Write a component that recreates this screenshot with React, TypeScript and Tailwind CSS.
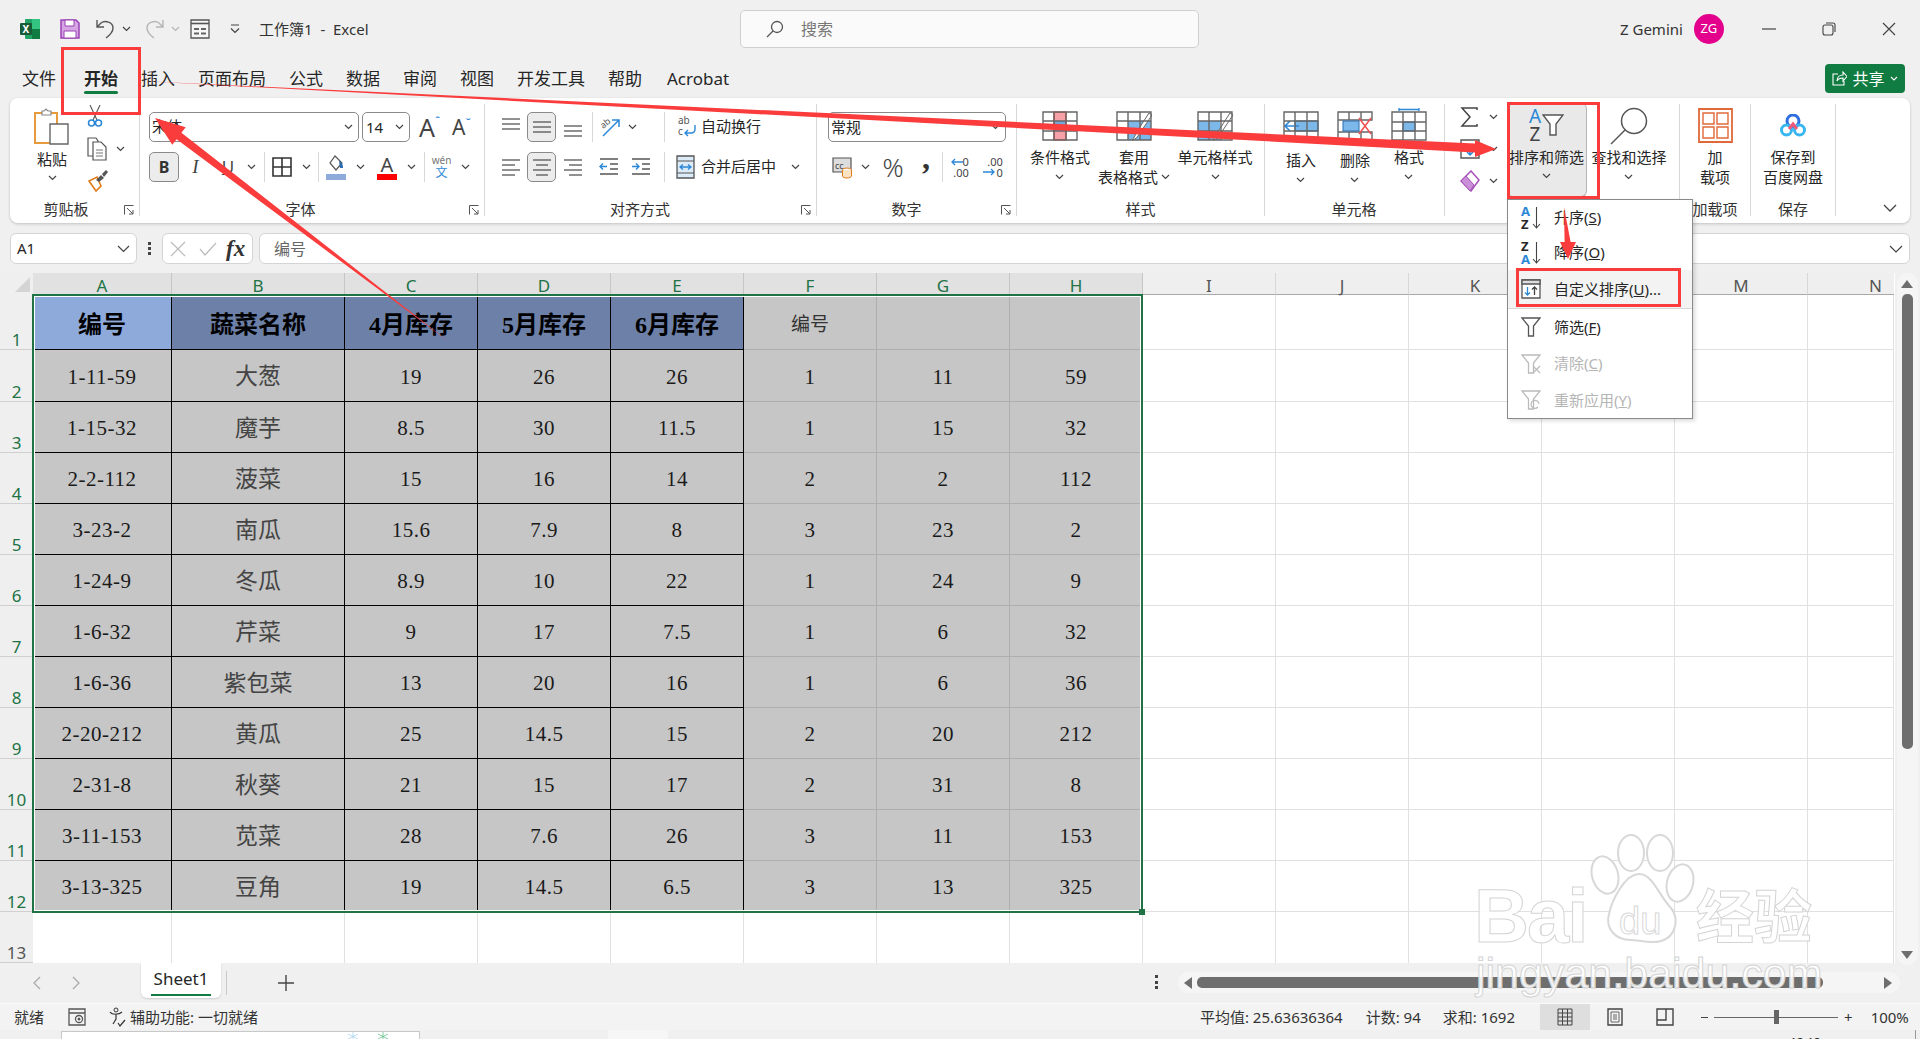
import type { ReactNode } from "react";

const RED = "#fb3c3c";

const rows = [
  ["1-11-59", "大葱", "19", "26", "26", "1", "11", "59"],
  ["1-15-32", "魔芋", "8.5", "30", "11.5", "1", "15", "32"],
  ["2-2-112", "菠菜", "15", "16", "14", "2", "2", "112"],
  ["3-23-2", "南瓜", "15.6", "7.9", "8", "3", "23", "2"],
  ["1-24-9", "冬瓜", "8.9", "10", "22", "1", "24", "9"],
  ["1-6-32", "芹菜", "9", "17", "7.5", "1", "6", "32"],
  ["1-6-36", "紫包菜", "13", "20", "16", "1", "6", "36"],
  ["2-20-212", "黄瓜", "25", "14.5", "15", "2", "20", "212"],
  ["2-31-8", "秋葵", "21", "15", "17", "2", "31", "8"],
  ["3-11-153", "苋菜", "28", "7.6", "26", "3", "11", "153"],
  ["3-13-325", "豆角", "19", "14.5", "6.5", "3", "13", "325"],
];

const colWidths = ["w-[139px]", "w-[173px]", "w-[133px]", "w-[133px]", "w-[133px]", "w-[133px]", "w-[133px]", "w-[133px]"];
const colNames = ["A", "B", "C", "D", "E", "F", "G", "H"];
const emptyCols = ["I", "J", "K", "L", "M"];
const emptyWidths = ["w-[133px]", "w-[133px]", "w-[133px]", "w-[133px]", "w-[133px]", "w-[86px]"];

function Chev({ className = "" }: { className?: string }) {
  return (
    <svg width="9" height="6" viewBox="0 0 9 6" className={`shrink-0 ${className}`}>
      <path d="M1 1l3.5 3.5L8 1" fill="none" stroke="#444" strokeWidth="1.2" />
    </svg>
  );
}

function Sep() {
  return <div className="h-[30px] w-px shrink-0 bg-[#d8d8d8]" />;
}

function Cell({ className, children }: { className: string; children: ReactNode }) {
  return <div className={`flex h-[30px] shrink-0 items-center justify-center ${className}`}>{children}</div>;
}

function Launcher() {
  return (
    <svg width="10" height="10" viewBox="0 0 10 10" className="absolute bottom-[1px] right-[5px]">
      <path d="M.5 9.5v-9h9M3 3l6 6M9 5v4H5" fill="none" stroke="#555" strokeWidth="1" />
    </svg>
  );
}

function Group({ label, launcher, className, labelClass = "", children }: { label: string; launcher?: boolean; className: string; labelClass?: string; children: ReactNode }) {
  return (
    <div className={`relative flex h-[112px] shrink-0 flex-col border-r border-[#d8d8d8] ${className}`}>
      <div className="h-[97px] shrink-0">{children}</div>
      <div className={`text-center text-[15px] leading-[16px] text-[#333] ${labelClass}`}>{label}</div>
      {launcher && <Launcher />}
    </div>
  );
}

function BigBtn({ icon, lines, chevInline, chevBelow = true, className = "", textClass = "" }: { icon: ReactNode; lines: string[]; chevInline?: boolean; chevBelow?: boolean; className?: string; textClass?: string }) {
  return (
    <div className={`flex shrink-0 flex-col items-center ${className}`}>
      <div className="flex h-[43px] items-center justify-center">{icon}</div>
      <div className={`flex flex-col items-center text-[15px] leading-[20px] whitespace-nowrap text-[#262626] ${textClass}`}>
        {lines.map((l, i) => (
          <div key={l} className="flex items-center gap-[3px]">
            {l}
            {chevInline && i === lines.length - 1 && <Chev />}
          </div>
        ))}
        {chevBelow && (
          <div className="flex h-[20px] items-center">
            <Chev />
          </div>
        )}
      </div>
    </div>
  );
}

const Lines = ({ ys }: { ys: number[][] }) => (
  <svg width="20" height="20" viewBox="0 0 20 20">
    {ys.map(([y, a, b]) => (
      <path key={`${y}-${a}`} d={`M${a} ${y}H${b}`} stroke="#555" strokeWidth="1.3" />
    ))}
  </svg>
);

const GridIcon = ({ children }: { children: ReactNode }) => (
  <svg width="36" height="30" viewBox="0 0 36 30">
    {children}
    <path d="M1 1h34v28H1zM1 10h34M1 20h34M12 1v28M24 1v28" fill="none" stroke="#666" strokeWidth="1.4" />
  </svg>
);

function Ribbon() {
  return (
    <div className="mx-[10px] flex h-[125px] shrink-0 rounded-[8px] bg-white pt-[6px] shadow-[0_1px_3px_rgba(0,0,0,0.2)]">
      {/* 剪贴板 */}
      <Group label="剪贴板" launcher className="w-[130px]" labelClass="pr-[17px]">
        <div className="flex">
          <div className="flex w-[84px] flex-col items-center pt-[4px]">
            <svg width="36" height="38" viewBox="0 0 36 38">
              <path d="M1 5h22v30H1z" fill="#fff" stroke="#e89b3c" strokeWidth="2" />
              <path d="M8 5V3h2l2-2 2 2h3v4H8z" fill="#fff" stroke="#888" strokeWidth="1.2" />
              <path d="M16 16h18v20H16z" fill="#fff" stroke="#666" strokeWidth="1.4" />
            </svg>
            <div className="mt-[3px] text-[15px] leading-[20px]">粘贴</div>
            <div className="flex h-[18px] items-center">
              <Chev />
            </div>
          </div>
          <div className="-ml-[7px] flex flex-col gap-[6px]">
            <div className="flex h-[26px] justify-start">
              <svg width="16" height="24" viewBox="0 0 16 24" className="mt-[1px]">
                <path d="M3 0l7 15M13 0L6 15" stroke="#555" strokeWidth="1.1" fill="none" />
                <circle cx="4.5" cy="18" r="3" fill="none" stroke="#2b88d8" strokeWidth="1.5" />
                <circle cx="11.5" cy="18" r="3" fill="none" stroke="#2b88d8" strokeWidth="1.5" />
              </svg>
            </div>
            <div className="flex h-[26px] items-center gap-[9px]">
              <svg width="20" height="24" viewBox="0 0 20 24">
                <path d="M1 1h8l2 3v15H1z" fill="#fff" stroke="#555" strokeWidth="1.2" />
                <path d="M6 5h8l5 5v13H6z" fill="#fff" stroke="#555" strokeWidth="1.2" />
                <path d="M9 13h7M9 16h7M9 19h7" stroke="#777" />
              </svg>
              <Chev />
            </div>
            <svg width="22" height="24" viewBox="0 0 22 24">
              <path d="M2 13l7 10 5-5-4-9z" fill="#fff" stroke="#e07b1a" strokeWidth="1.6" />
              <path d="M9 12l5-5 3 3-5 4zM15 6l4-4 2 2-4 5z" fill="#555" />
            </svg>
          </div>
        </div>
      </Group>

      {/* 字体 */}
      <Group label="字体" launcher className="w-[345px] pl-[9px]" labelClass="pr-[32px]">
        <div className="mt-[8px] flex items-center">
          <div className="flex h-[30px] w-[210px] items-center justify-between rounded-[5px] border border-[#8a8a8a] pl-[2px] pr-[5px] font-['Liberation_Serif','Noto_Sans_CJK_SC',serif] text-[15px]">
            宋体
            <Chev />
          </div>
          <div className="ml-[3px] flex h-[30px] w-[48px] items-center justify-between rounded-[5px] border border-[#8a8a8a] pl-[3px] pr-[5px] text-[15px]">
            14
            <Chev />
          </div>
          <div className="ml-[9px] flex w-[33px] items-start text-[25px] leading-none text-[#444]">
            A<span className="text-[11px] font-bold text-[#2b88d8]">ˆ</span>
          </div>
          <div className="flex w-[32px] items-start text-[21px] leading-none text-[#444]">
            A<span className="text-[11px] font-bold text-[#2b88d8]">ˇ</span>
          </div>
        </div>
        <div className="mt-[10px] flex items-center">
          <div className="flex h-[30px] w-[30px] shrink-0 items-center justify-center rounded-[5px] border border-[#8a8a8a] bg-[#ececec] text-[16px] font-bold text-[#333]">B</div>
          <Cell className="w-[33px] font-['Liberation_Serif',serif] text-[19px] italic text-[#444]">I</Cell>
          <Cell className="w-[32px] text-[17px] text-[#444] underline">U</Cell>
          <Cell className="w-[14px]"><Chev /></Cell>
          <div className="ml-[6px]"><Sep /></div>
          <Cell className="w-[34px]">
            <svg width="20" height="20" viewBox="0 0 20 20"><path d="M1 1h18v18H1zM10 1v18M1 10h18" fill="none" stroke="#333" strokeWidth="1.6" /></svg>
          </Cell>
          <Cell className="w-[14px]"><Chev /></Cell>
          <div className="ml-[5px]"><Sep /></div>
          <Cell className="w-[34px]">
            <svg width="20" height="25" viewBox="0 0 20 25">
              <path d="M9 1l7 7-6 7-6-7z" fill="#fff" stroke="#555" strokeWidth="1.2" />
              <path d="M13 6c3 1 4 4 4 7h-3z" fill="#2b6cb0" />
              <rect y="19" width="20" height="6" fill="#8eaadb" />
            </svg>
          </Cell>
          <Cell className="w-[14px]"><Chev /></Cell>
          <Cell className="ml-[3px] w-[34px]">
            <div className="flex flex-col items-center">
              <span className="text-[20px] leading-[19px] text-[#444]">A</span>
              <div className="h-[6px] w-[20px] bg-[#ff0000]" />
            </div>
          </Cell>
          <Cell className="w-[14px]"><Chev /></Cell>
          <div className="ml-[6px]"><Sep /></div>
          <Cell className="w-[33px]">
            <div className="flex flex-col items-center text-[#777]">
              <span className="text-[10px] leading-[11px]">wén</span>
              <span className="text-[12px] leading-[13px] text-[#2b88d8]">文</span>
            </div>
          </Cell>
          <Cell className="w-[14px]"><Chev /></Cell>
        </div>
      </Group>

      {/* 对齐方式 */}
      <Group label="对齐方式" launcher className="w-[332px] pl-[9px]" labelClass="pr-[30px]">
        <div className="mt-[8px] flex items-center">
          <Cell className="w-[33px]"><Lines ys={[[2, 1, 19], [7, 1, 19], [12, 1, 19]]} /></Cell>
          <Cell className="w-[29px] rounded-[5px] border border-[#8a8a8a] bg-[#ececec]"><Lines ys={[[5, 1, 19], [10, 1, 19], [15, 1, 19]]} /></Cell>
          <Cell className="w-[34px]"><Lines ys={[[9, 1, 19], [14, 1, 19], [19, 1, 19]]} /></Cell>
          <div className="ml-[2px]"><Sep /></div>
          <Cell className="w-[34px]">
            <svg width="22" height="22" viewBox="0 0 22 22" className="overflow-visible">
              <text x="2" y="11" fontSize="9" fill="#555" transform="rotate(-40 6 9)">ab</text>
              <path d="M4 20L20 4M13 4h7v7" fill="none" stroke="#2b88d8" strokeWidth="1.5" />
            </svg>
          </Cell>
          <Chev className="ml-[1px]" />
          <div className="ml-[27px]"><Sep /></div>
          <div className="-mt-[2px] ml-[13px] flex items-center text-[15px] text-[#262626]">
            <svg width="18" height="24" viewBox="0 0 18 24" className="mr-[5px]">
              <text x="0" y="10" fontSize="10" fill="#555">ab</text>
              <text x="0" y="21" fontSize="10" fill="#555">c</text>
              <path d="M17 11v4c0 3-2 4-4 4H7M10 16l-3 3 3 3" fill="none" stroke="#2b88d8" strokeWidth="1.4" />
            </svg>
            自动换行
          </div>
        </div>
        <div className="mt-[10px] flex items-center">
          <Cell className="w-[33px]"><Lines ys={[[3, 1, 19], [8, 1, 14], [13, 1, 19], [18, 1, 14]]} /></Cell>
          <Cell className="w-[29px] rounded-[5px] border border-[#8a8a8a] bg-[#ececec]"><Lines ys={[[3, 1, 19], [8, 4, 16], [13, 1, 19], [18, 4, 16]]} /></Cell>
          <Cell className="w-[34px]"><Lines ys={[[3, 1, 19], [8, 6, 19], [13, 1, 19], [18, 6, 19]]} /></Cell>
          <Cell className="w-[37px]">
            <svg width="20" height="18" viewBox="0 0 20 18">
              <path d="M1 1h18M11 6h8M11 11h8M1 16h18" stroke="#555" strokeWidth="1.3" />
              <path d="M8 8.5H1M4 5.5l-3 3 3 3" fill="none" stroke="#2b88d8" strokeWidth="1.4" />
            </svg>
          </Cell>
          <Cell className="w-[27px]">
            <svg width="20" height="18" viewBox="0 0 20 18">
              <path d="M1 1h18M11 6h8M11 11h8M1 16h18" stroke="#555" strokeWidth="1.3" />
              <path d="M1 8.5h7M5 5.5l3 3-3 3" fill="none" stroke="#2b88d8" strokeWidth="1.4" />
            </svg>
          </Cell>
          <div className="ml-[10px]"><Sep /></div>
          <svg width="19" height="24" viewBox="0 0 19 24" className="ml-[11px] shrink-0">
            <path d="M1 1h17v22H1z" fill="#dcebf8" stroke="#555" strokeWidth="1.3" />
            <path d="M1 6h17M1 18h17" stroke="#555" />
            <path d="M4 12h11M7 9.5L4 12l3 2.5M12 9.5l3 2.5-3 2.5" fill="none" stroke="#2b88d8" strokeWidth="1.3" />
          </svg>
          <span className="-mt-[2px] ml-[6px] text-[15px] whitespace-nowrap text-[#262626]">合并后居中</span>
          <Chev className="ml-[15px]" />
        </div>
      </Group>

      {/* 数字 */}
      <Group label="数字" launcher className="w-[200px]" labelClass="pr-[20px]">
        <div className="ml-[11px] mt-[8px] flex h-[30px] w-[178px] items-center justify-between rounded-[5px] border border-[#8a8a8a] pl-[2px] pr-[5px] text-[15px]">
          常规
          <Chev />
        </div>
        <div className="mt-[10px] flex items-center pl-[15px]">
          <svg width="20" height="24" viewBox="0 0 20 24" className="shrink-0">
            <path d="M1 3h18v14H1z" fill="#ddd" stroke="#555" strokeWidth="1.2" />
            <text x="3" y="14" fontSize="9" fill="#444">cc</text>
            <ellipse cx="15" cy="15" rx="4.5" ry="2" fill="#fff" stroke="#e07b1a" />
            <path d="M10.5 15v6c0 1 2 2 4.5 2s4.5-1 4.5-2v-6" fill="#fbe3c4" stroke="#e07b1a" />
          </svg>
          <Chev className="ml-[9px]" />
          <Cell className="ml-[8px] w-[30px] text-[26px] font-light text-[#444]">%</Cell>
          <Cell className="ml-[3px] w-[30px] font-['Liberation_Serif',serif] text-[32px] font-bold text-[#333]">
            <span className="-mt-[18px]">,</span>
          </Cell>
          <div className="ml-[1px]"><Sep /></div>
          <Cell className="ml-[2px] w-[32px]">
            <div className="relative flex flex-col items-end text-[11px] leading-[11px] text-[#444]">
              <span>0</span>
              <span>.00</span>
              <svg width="12" height="8" viewBox="0 0 12 8" className="absolute -left-[2px] top-[2px]"><path d="M12 4H1M4 1L1 4l3 3" fill="none" stroke="#2b88d8" strokeWidth="1.3" /></svg>
            </div>
          </Cell>
          <Cell className="ml-[1px] w-[34px]">
            <div className="relative flex flex-col items-end text-[11px] leading-[11px] text-[#444]">
              <span>.00</span>
              <span>0</span>
              <svg width="12" height="8" viewBox="0 0 12 8" className="absolute -left-[4px] top-[12px]"><path d="M0 4h11M8 1l3 3-3 3" fill="none" stroke="#2b88d8" strokeWidth="1.3" /></svg>
            </div>
          </Cell>
        </div>
      </Group>

      {/* 样式 */}
      <Group label="样式" className="w-[248px]">
        <div className="flex">
          <BigBtn
            className="ml-[6px] w-[74px]"
            lines={["条件格式"]}
            icon={<GridIcon><rect x="12" y="1" width="12" height="10" fill="#f8a0a8" /><rect x="12" y="10" width="12" height="10" fill="#6fa8dc" /><rect x="12" y="20" width="12" height="9" fill="#f8a0a8" /><path d="M12 1h12v28H12z" fill="none" stroke="#e03030" strokeWidth="1.2" /></GridIcon>}
          />
          <BigBtn
            className="w-[74px]"
            lines={["套用", "表格格式"]}
            chevInline
            chevBelow={false}
            icon={<GridIcon><rect x="12" y="10" width="23" height="19" fill="#7db8ea" /><path d="M36 4L22 25c-2 3-5 4-6 4 2-2 3-4 4-7L33 2z" fill="#fff" stroke="#666" /></GridIcon>}
          />
          <BigBtn
            className="ml-[7px] w-[74px]"
            lines={["单元格样式"]}
            icon={<GridIcon><rect x="1" y="10" width="22" height="19" fill="#7db8ea" /><path d="M36 4L22 25c-2 3-5 4-6 4 2-2 3-4 4-7L33 2z" fill="#fff" stroke="#666" /></GridIcon>}
          />
        </div>
      </Group>

      {/* 单元格 */}
      <Group label="单元格" className="w-[180px] pl-[9px]" labelClass="pr-[10px]">
        <div className="flex">
          <BigBtn
            className="w-[54px]"
            textClass="mt-[3px]"
            lines={["插入"]}
            icon={<GridIcon><rect x="12" y="10" width="23" height="10" fill="#7db8ea" stroke="#2b6cb0" /><path d="M16 15H2M7 10l-5 5 5 5" fill="none" stroke="#2b88d8" strokeWidth="1.6" /></GridIcon>}
          />
          <BigBtn
            className="w-[54px]"
            textClass="mt-[3px]"
            lines={["删除"]}
            icon={
              <svg width="36" height="30" viewBox="0 0 36 30">
                <path d="M1 1h34v8H1zM1 21h34v8H1zM1 9v12M12 1v8M24 1v8M12 21v8M24 21v8" fill="none" stroke="#666" strokeWidth="1.4" />
                <rect x="6" y="10" width="16" height="10" fill="#7db8ea" stroke="#2b6cb0" />
                <path d="M22 7l12 16M34 7L22 23" stroke="#f05050" strokeWidth="1.5" />
              </svg>
            }
          />
          <BigBtn
            className="w-[54px]"
            lines={["格式"]}
            icon={
              <svg width="36" height="34" viewBox="0 0 36 34" className="-mt-[4px]">
                <path d="M8 1v3M28 1v3M8 2.5h20" stroke="#2b88d8" strokeWidth="1.3" />
                <rect x="12" y="15" width="12" height="9" fill="#7db8ea" stroke="#2b6cb0" />
                <path d="M1 5h34v28H1zM1 15h34M1 24h34M12 5v28M24 5v28" fill="none" stroke="#666" strokeWidth="1.4" />
              </svg>
            }
          />
        </div>
      </Group>

      {/* 编辑 */}
      <Group label="" className="w-[235px]">
        <div className="flex">
          <div className="flex w-[62px] shrink-0 flex-col gap-[6px] pl-[15px]">
            <div className="flex h-[26px] items-center gap-[9px]">
              <svg width="20" height="20" viewBox="0 0 20 20"><path d="M17 3V1H2l8 9-8 9h15v-2" fill="none" stroke="#444" strokeWidth="1.5" /></svg>
              <Chev />
            </div>
            <div className="flex h-[26px] items-center gap-[9px]">
              <svg width="20" height="20" viewBox="0 0 20 20">
                <path d="M1 1h18v18H1zM1 6h18" fill="#fff" stroke="#555" strokeWidth="1.4" />
                <path d="M10 9v7M7 13l3 3 3-3" fill="none" stroke="#2b88d8" strokeWidth="1.5" />
              </svg>
              <Chev />
            </div>
            <div className="flex h-[26px] items-center gap-[9px]">
              <svg width="20" height="22" viewBox="0 0 20 22">
                <path d="M11 1l8 9-8 11-10-10z" fill="#fff" stroke="#a64fb8" strokeWidth="1.5" />
                <path d="M1 11l5-5 8 9-4 6z" fill="#c98fd8" stroke="#a64fb8" />
              </svg>
              <Chev />
            </div>
          </div>
          <div className="-mt-[1px] h-[94px] w-[80px] shrink-0 rounded-[6px] border border-l-0 border-t-0 border-[#b5b5b5] bg-[#e9e9e9]">
            <div className="flex h-[44px] items-center justify-center">
              <div className="flex items-center gap-[1px]">
                <div className="flex flex-col items-center text-[19px] leading-[18px]">
                  <span className="text-[#2b88d8]">A</span>
                  <span className="text-[#444]">Z</span>
                </div>
                <svg width="22" height="22" viewBox="0 0 22 22"><path d="M1 1h20l-7 9v11H8V10z" fill="#fff" stroke="#555" strokeWidth="1.4" /></svg>
              </div>
            </div>
            <div className="text-center text-[15px] leading-[20px] whitespace-nowrap">排序和筛选</div>
            <div className="flex h-[18px] items-center justify-center"><Chev /></div>
          </div>
          <BigBtn
            className="w-[84px]"
            lines={["查找和选择"]}
            icon={
              <svg width="38" height="38" viewBox="0 0 38 38">
                <circle cx="24" cy="14" r="12.5" fill="#fff" stroke="#555" strokeWidth="1.5" />
                <path d="M15 23L1 37" stroke="#555" strokeWidth="1.5" />
              </svg>
            }
          />
        </div>
      </Group>

      {/* 加载项 */}
      <Group label="加载项" className="w-[71px]">
        <BigBtn
          lines={["加", "载项"]}
          chevBelow={false}
          icon={
            <svg width="35" height="35" viewBox="0 0 35 35">
              <path d="M1 1h33v33H1z" fill="#fff" stroke="#e0693a" strokeWidth="1.8" />
              <path d="M5 5h11v11H5zM19 5h11v11H19zM5 19h11v11H5zM19 19h11v11H19z" fill="#fff" stroke="#e0693a" strokeWidth="1.4" />
            </svg>
          }
        />
      </Group>

      {/* 保存 */}
      <Group label="保存" className="w-[85px]">
        <BigBtn
          lines={["保存到", "百度网盘"]}
          chevBelow={false}
          icon={
            <svg width="26" height="24" viewBox="0 0 26 24">
              <circle cx="13" cy="7" r="6" fill="none" stroke="#2f6fe0" strokeWidth="3" />
              <circle cx="6.5" cy="16" r="5" fill="none" stroke="#38b6f0" strokeWidth="3" />
              <circle cx="19.5" cy="16" r="5" fill="none" stroke="#38b6f0" strokeWidth="3" />
              <path d="M9 15l4-5 4 5" fill="none" stroke="#ef5a78" strokeWidth="3" />
            </svg>
          }
        />
      </Group>

      <div className="flex flex-1 items-end justify-end pb-[11px] pr-[13px]">
        <svg width="14" height="8" viewBox="0 0 14 8"><path d="M1 1l6 6 6-6" fill="none" stroke="#444" strokeWidth="1.3" /></svg>
      </div>
    </div>
  );
}

function TitleBar() {
  return (
    <div className="flex h-[58px] shrink-0 items-center">
      <svg width="20" height="20" viewBox="0 0 20 20" className="ml-[20px] shrink-0">
        <rect x="5" width="15" height="20" rx="1" fill="#21a366" />
        <rect x="12" width="8" height="10" fill="#33c481" />
        <rect x="12" y="10" width="8" height="10" fill="#107c41" />
        <rect y="4" width="12" height="12" rx="1" fill="#185c37" />
        <text x="2.5" y="13.5" fontSize="10" fontWeight="700" fill="#fff">X</text>
      </svg>
      <svg width="20" height="20" viewBox="0 0 20 20" className="ml-[20px] shrink-0">
        <path d="M1 1h15l3 3v15H1z" fill="#d6a5e4" stroke="#9a42b4" strokeWidth="1.5" />
        <path d="M5 1h9v6H5zM4 12h12v7H4z" fill="#fff" stroke="#9a42b4" />
      </svg>
      <svg width="18" height="20" viewBox="0 0 18 20" className="ml-[16px] shrink-0">
        <path d="M1 1v7h7M1 8l4-4c4-3 12-1 12 5 0 4-3 7-7 10" fill="none" stroke="#555" strokeWidth="1.4" />
      </svg>
      <Chev className="ml-[8px]" />
      <svg width="18" height="20" viewBox="0 0 18 20" className="ml-[15px] shrink-0">
        <path d="M17 1v7h-7M17 8l-4-4C9 1 1 3 1 9c0 4 3 7 7 10" fill="none" stroke="#b5b5b5" strokeWidth="1.4" />
      </svg>
      <svg width="9" height="6" viewBox="0 0 9 6" className="ml-[7px] shrink-0"><path d="M1 1l3.5 3.5L8 1" fill="none" stroke="#b5b5b5" strokeWidth="1.2" /></svg>
      <svg width="20" height="20" viewBox="0 0 20 20" className="ml-[10px] shrink-0">
        <path d="M1 1h18v18H1z" fill="#f7f7f7" stroke="#555" strokeWidth="1.3" />
        <path d="M1 4.5h18" stroke="#555" strokeWidth="1.6" />
        <path d="M4 9h5v2H4zM11 9h5v2h-5zM4 13.500h5v2H4zM11 13.500h5v2h-5z" fill="#666" />
      </svg>
      <svg width="10" height="10" viewBox="0 0 10 10" className="ml-[20px] shrink-0">
        <path d="M1 1h8M1 4.500l4 4 4-4" fill="none" stroke="#444" strokeWidth="1.2" />
      </svg>
      <div className="ml-[19px] w-[150px] shrink-0 text-[15px] whitespace-nowrap text-[#333]">工作簿1&nbsp;&nbsp;-&nbsp;&nbsp;Excel</div>
      <div className="ml-[331px] flex h-[38px] w-[459px] shrink-0 items-center rounded-[5px] border border-[#d0d0d0] bg-[#fafafa] pl-[25px] text-[16px] text-[#777]">
        <svg width="18" height="18" viewBox="0 0 18 18" className="shrink-0">
          <circle cx="11" cy="7" r="5.500" fill="none" stroke="#555" strokeWidth="1.3" />
          <path d="M7 11l-6 6" stroke="#555" strokeWidth="1.3" />
        </svg>
        <span className="ml-[17px]">搜索</span>
      </div>
      <div className="ml-[421px] text-[15px] whitespace-nowrap text-[#333]">Z Gemini</div>
      <div className="ml-[11px] flex h-[30px] w-[30px] shrink-0 items-center justify-center rounded-full bg-[#e3008c] text-[13px] text-white">ZG</div>
      <svg width="14" height="2" viewBox="0 0 14 2" className="ml-[38px] shrink-0"><path d="M0 1h14" stroke="#444" strokeWidth="1.2" /></svg>
      <svg width="14" height="14" viewBox="0 0 14 14" className="ml-[46px] shrink-0">
        <rect x="1" y="3" width="10" height="10" rx="2" fill="none" stroke="#444" strokeWidth="1.1" />
        <path d="M4 1h7a2 2 0 012 2v7" fill="none" stroke="#444" strokeWidth="1.1" />
      </svg>
      <svg width="14" height="14" viewBox="0 0 14 14" className="ml-[46px] shrink-0"><path d="M1 1l12 12M13 1L1 13" stroke="#444" strokeWidth="1.2" /></svg>
    </div>
  );
}

function TabsBar() {
  const tabs = ["插入", "页面布局", "公式", "数据", "审阅", "视图", "开发工具", "帮助", "Acrobat"];
  return (
    <div className="flex h-[40px] shrink-0 items-start pl-[22px] text-[17px] text-[#262626]">
      <div className="mt-[8px] flex gap-[23px] leading-[26px]">
        <span className="mr-[5px]">文件</span>
        <div className="relative font-bold">
          开始
          <div className="absolute -bottom-[2px] left-0 right-0 h-[3px] rounded-[2px] bg-[#107c41]" />
        </div>
        {tabs.map((t) => (
          <span key={t} className={t === "Acrobat" ? "ml-[2px]" : ""}>{t}</span>
        ))}
      </div>
      <div className="ml-auto mr-[15px] mt-[6px] flex h-[29px] w-[80px] items-center justify-center gap-[5px] rounded-[4px] bg-[#107c41] text-[16px] text-white">
        <svg width="15" height="15" viewBox="0 0 15 15"><path d="M6 3H1v11h11v-4M5 10c0-4 3-6 6-6V1l4 4.500L11 10V7C8 7 6 8 5 10z" fill="none" stroke="#fff" strokeWidth="1.1" /></svg>
        共享
        <svg width="8" height="5" viewBox="0 0 8 5"><path d="M1 1l3 3 3-3" fill="none" stroke="#fff" strokeWidth="1.1" /></svg>
      </div>
    </div>
  );
}

function FormulaBar() {
  return (
    <div className="flex h-[50px] shrink-0 items-start pl-[10px] pt-[10px] text-[15px]">
      <div className="flex h-[31px] w-[127px] items-center justify-between rounded-[6px] border border-[#d4d4d4] bg-white pl-[6px] pr-[6px]">
        A1
        <svg width="13" height="8" viewBox="0 0 13 8"><path d="M1 1l5.500 5.500L12 1" fill="none" stroke="#444" strokeWidth="1.2" /></svg>
      </div>
      <div className="mx-[10px] flex h-[31px] w-[5px] flex-col items-center justify-center gap-[2px]">
        <div className="h-[3px] w-[3px] bg-[#444]" />
        <div className="h-[3px] w-[3px] bg-[#444]" />
        <div className="h-[3px] w-[3px] bg-[#444]" />
      </div>
      <div className="flex h-[31px] w-[91px] items-center rounded-[6px] border border-[#d4d4d4] bg-white pl-[7px]">
        <svg width="16" height="16" viewBox="0 0 16 16" className="shrink-0"><path d="M1 1l14 14M15 1L1 15" stroke="#bbb" strokeWidth="1.2" /></svg>
        <svg width="18" height="14" viewBox="0 0 18 14" className="ml-[13px] shrink-0"><path d="M1 7l5 6L17 1" fill="none" stroke="#bbb" strokeWidth="1.2" /></svg>
        <span className="ml-[9px] font-['Liberation_Serif',serif] text-[23px] font-bold italic leading-none text-[#333]">fx</span>
      </div>
      <div className="ml-[6px] mr-[10px] flex h-[31px] flex-1 items-center justify-between rounded-[6px] border border-[#d4d4d4] bg-white pl-[14px] pr-[6px] text-[16px] text-[#666]">
        编号
        <svg width="14" height="8" viewBox="0 0 14 8"><path d="M1 1l6 6 6-6" fill="none" stroke="#444" strokeWidth="1.2" /></svg>
      </div>
    </div>
  );
}

function RowHead({ n, plain }: { n: number; plain?: boolean }) {
  return (
    <div className={`flex w-[33px] shrink-0 items-end justify-center border-b border-[#d0d0d0] bg-[#efefef] font-['Noto_Sans',sans-serif] text-[17px] leading-[18px] ${plain ? "text-[#555]" : "text-[#217346]"}`}>{n}</div>
  );
}

function EmptyCells({ last }: { last?: boolean }) {
  return (
    <>
      {emptyWidths.map((w, i) => (
        <div key={i} className={`${w} shrink-0 border-r border-[#e0e0e0] ${last ? "" : "border-b"}`} />
      ))}
    </>
  );
}

function Sheet() {
  return (
    <div className="flex h-[690px] shrink-0">
      <div className="relative w-[1895px] shrink-0 bg-white">
        {/* 列标题 */}
        <div className="flex h-[22px] text-[17px] leading-[25px]">
          <div className="flex w-[33px] shrink-0 items-end justify-end bg-[#efefef] pb-[3px] pr-[3px]">
            <div className="h-0 w-0 border-b-[15px] border-l-[15px] border-b-[#d4d4d4] border-l-transparent" />
          </div>
          {colNames.map((c, i) => (
            <div key={c} className={`${colWidths[i]} shrink-0 border-r border-[#c6c6c6] bg-[#e1e1e1] text-center text-[#217346]`}>{c}</div>
          ))}
          {emptyCols.map((c, i) => (
            <div key={c} className={`${emptyWidths[i]} shrink-0 border-b border-r border-[#a8a8a8] border-r-[#d8d8d8] bg-[#efefef] text-center text-[#555]`}>{c}</div>
          ))}
          <div className="w-[86px] shrink-0 border-b border-[#a8a8a8] bg-[#efefef] pl-[61px] text-[#555]">N</div>
        </div>

        {/* 第 1 行 */}
        <div className="flex h-[55px] font-['Liberation_Serif','Noto_Sans_CJK_SC',serif]">
          <RowHead n={1} />
          {["编号", "蔬菜名称", "4月库存", "5月库存", "6月库存"].map((h, i) => (
            <div key={h} className={`${colWidths[i]} flex shrink-0 items-center justify-center border-b border-r border-black pt-[5px] text-[24px] font-bold text-black ${i === 0 ? "bg-[#8eaadb]" : "bg-[#6d81a8]"}`}>{h}</div>
          ))}
          <div className={`${colWidths[5]} flex shrink-0 items-center justify-center border-b border-r border-[#aeaeae] bg-[#c6c6c6] pt-[7px] text-[19px] text-[#333]`}>编号</div>
          <div className={`${colWidths[6]} shrink-0 border-b border-r border-[#aeaeae] bg-[#c6c6c6]`} />
          <div className={`${colWidths[7]} shrink-0 border-b border-r border-[#aeaeae] bg-[#c6c6c6]`} />
          <EmptyCells />
        </div>

        {/* 数据行 */}
        {rows.map((r, ri) => (
          <div key={r[0]} className={`flex font-['Liberation_Serif','Noto_Sans_CJK_SC',serif] ${ri === 0 ? "h-[52px]" : "h-[51px]"}`}>
            <RowHead n={ri + 2} />
            {r.map((v, i) => (
              <div key={i} className={`${colWidths[i]} flex shrink-0 items-center justify-center border-b border-r bg-[#c6c6c6] pt-[4px] ${i < 5 ? "border-black" : "border-[#aeaeae]"} ${i === 1 ? "text-[23px] text-[#444]" : "text-[21px] tracking-[0.5px] text-[#1a1a1a]"}`}>{v}</div>
            ))}
            <EmptyCells />
          </div>
        ))}

        {/* 第 13 行 */}
        <div className="flex h-[51px]">
          <RowHead n={13} plain />
          {colWidths.map((w, i) => (
            <div key={i} className={`${w} shrink-0 border-r border-[#e0e0e0]`} />
          ))}
          <EmptyCells last />
        </div>

        {/* 选区 */}
        <div className="pointer-events-none absolute left-[32px] top-[21px] h-[619px] w-[1111px] border-2 border-[#217346]">
          <div className="h-full w-full border border-white" />
          <div className="absolute -bottom-[4px] -right-[4px] h-[6px] w-[6px] bg-[#217346]" />
        </div>
      </div>

      <div className="relative ml-[2px] h-[692px] w-[21px] shrink-0 rounded-[10px] bg-[#f5f5f5]">
        <svg width="12" height="8" viewBox="0 0 12 8" className="absolute left-[4px] top-[7px]"><path d="M6 0l6 8H0z" fill="#6e6e6e" /></svg>
        <div className="absolute left-[5px] top-[21px] h-[455px] w-[11px] rounded-[5px] bg-[#6e6e6e]" />
        <svg width="12" height="8" viewBox="0 0 12 8" className="absolute bottom-[6px] left-[4px]"><path d="M0 0h12L6 8z" fill="#6e6e6e" /></svg>
      </div>
    </div>
  );
}

function SheetTabs() {
  return (
    <div className="flex h-[40px] shrink-0 items-start">
      <svg width="9" height="14" viewBox="0 0 9 14" className="ml-[32px] mt-[13px] shrink-0"><path d="M8 1L2 7l6 6" fill="none" stroke="#aaa" strokeWidth="1.3" /></svg>
      <svg width="9" height="14" viewBox="0 0 9 14" className="ml-[31px] mt-[13px] shrink-0"><path d="M1 1l6 6-6 6" fill="none" stroke="#aaa" strokeWidth="1.3" /></svg>
      <div className="ml-[60px] h-[35px] w-[80px] shrink-0 rounded-b-[6px] bg-white text-center text-[17px] leading-[31px] shadow-[0_1px_2px_rgba(0,0,0,0.15)]">
        <span>Sheet1</span>
        <div className="mx-[10px] h-[2px] bg-[#107c41]" />
      </div>
      <div className="ml-[5px] mt-[8px] h-[24px] w-px shrink-0 bg-[#c8c8c8]" />
      <svg width="16" height="16" viewBox="0 0 16 16" className="ml-[51px] mt-[12px] shrink-0"><path d="M8 0v16M0 8h16" stroke="#444" strokeWidth="1.4" /></svg>
      <div className="ml-[861px] mt-[12px] flex h-[14px] w-[3px] shrink-0 flex-col justify-between">
        <div className="h-[3px] w-[3px] bg-[#444]" />
        <div className="h-[3px] w-[3px] bg-[#444]" />
        <div className="h-[3px] w-[3px] bg-[#444]" />
      </div>
      <div className="ml-[20px] mt-[9px] flex h-[21px] w-[722px] shrink-0 items-center rounded-[10px] bg-[#f5f5f5] pl-[6px]">
        <svg width="8" height="12" viewBox="0 0 8 12" className="shrink-0"><path d="M8 0v12L0 6z" fill="#6e6e6e" /></svg>
        <div className="ml-[5px] h-[11px] w-[626px] shrink-0 rounded-[5px] bg-[#6e6e6e]" />
        <svg width="8" height="12" viewBox="0 0 8 12" className="ml-[61px] shrink-0"><path d="M0 0v12l8-6z" fill="#6e6e6e" /></svg>
      </div>
    </div>
  );
}

function StatusBar() {
  return (
    <div className="flex h-[27px] shrink-0 items-center border-t border-[#fafafa] bg-[#f3f3f3] pl-[14px] text-[15px] text-[#333]">
      <span>就绪</span>
      <svg width="18" height="18" viewBox="0 0 18 18" className="ml-[24px] shrink-0">
        <path d="M1 1h16v16H1zM1 5h16" fill="none" stroke="#555" strokeWidth="1.3" />
        <circle cx="11" cy="11" r="3.500" fill="#fff" stroke="#555" strokeWidth="1.3" />
        <circle cx="11" cy="11" r="1.500" fill="#555" />
      </svg>
      <svg width="18" height="20" viewBox="0 0 18 20" className="ml-[22px] shrink-0">
        <circle cx="8" cy="3" r="2" fill="none" stroke="#333" />
        <path d="M2 5c2 3 9 3 12 0M8 7v5l-3 5M10 16l2 3 5-6" fill="none" stroke="#333" strokeWidth="1.2" />
      </svg>
      <span className="ml-[4px] whitespace-nowrap">辅助功能: 一切就绪</span>
      <span className="ml-[942px] whitespace-nowrap">平均值: 25.63636364</span>
      <span className="ml-[23px] whitespace-nowrap">计数: 94</span>
      <span className="ml-[22px] whitespace-nowrap">求和: 1692</span>
      <div className="ml-[25px] flex h-[26px] w-[50px] shrink-0 items-center justify-center bg-[#dedede]">
        <svg width="16" height="18" viewBox="0 0 16 18"><path d="M1 1h14v16H1zM1 5h14M1 9h14M1 13h14M5.500 1v16M10.500 1v16" fill="none" stroke="#444" /></svg>
      </div>
      <svg width="16" height="18" viewBox="0 0 16 18" className="ml-[17px] shrink-0"><path d="M1 1h14v16H1z" fill="none" stroke="#444" strokeWidth="1.4" /><path d="M4 4h8v10H4zM6 7h4M6 9h4M6 11h4" fill="none" stroke="#666" /></svg>
      <svg width="18" height="18" viewBox="0 0 18 18" className="ml-[33px] shrink-0"><path d="M1 1h16v16H1zM1 12h9V1" fill="none" stroke="#444" strokeWidth="1.4" /></svg>
      <div className="ml-[27px] h-px w-[7px] shrink-0 bg-[#444]" />
      <div className="relative ml-[6px] h-px w-[124px] shrink-0 bg-[#666]">
        <div className="absolute left-[60px] top-[-7px] h-[14px] w-[5px] bg-[#666]" />
      </div>
      <span className="ml-[6px] text-[15px] leading-none">+</span>
      <span className="ml-[18px] whitespace-nowrap">100%</span>
    </div>
  );
}

function BottomStrip() {
  return (
    <div className="flex h-[9px] shrink-0 overflow-hidden bg-[#f0f0f0]">
      <div className="ml-[61px] mt-[1px] h-[8px] w-[359px] shrink-0 border border-b-0 border-[#c8c8c8] bg-white pl-[285px]">
        <svg width="44" height="8" viewBox="0 0 44 8">
          <path d="M6 0v8M1 2l10 5M11 2L1 7" stroke="#a9d3ef" strokeWidth=".8" />
          <path d="M36 0v8M31 2l10 5M41 2l-10 5" stroke="#66c08a" strokeWidth=".8" />
        </svg>
      </div>
      <div className="ml-[188px] h-[9px] w-[60px] shrink-0 bg-[#f6f6f6]" />
      <div className="ml-[1122px] mt-[7px] w-[40px] shrink-0 text-[12px] leading-none text-[#222]">12:12</div>
      <div className="ml-[85px] h-[9px] w-px shrink-0 bg-[#999]" />
    </div>
  );
}

function Menu() {
  return (
    <div className="absolute left-[1507px] top-[199px] z-10 w-[186px] border border-[#8a8a8a] bg-white text-[15px] text-[#262626] shadow-[2px_2px_4px_rgba(0,0,0,0.15)]">
      <div className="flex h-[35px] items-center">
        <div className="flex w-[46px] justify-center">
          <div className="flex items-center">
            <div className="flex flex-col text-[13px] leading-[13px] font-bold"><span className="text-[#2b88d8]">A</span><span>Z</span></div>
            <svg width="9" height="22" viewBox="0 0 9 22" className="ml-[2px]"><path d="M4.500 0v21M1 17l3.500 4L8 17" fill="none" stroke="#444" strokeWidth="1.1" /></svg>
          </div>
        </div>
        升序(<span className="underline">S</span>)
      </div>
      <div className="flex h-[35px] items-center">
        <div className="flex w-[46px] justify-center">
          <div className="flex items-center">
            <div className="flex flex-col text-[13px] leading-[13px] font-bold"><span>Z</span><span className="text-[#2b88d8]">A</span></div>
            <svg width="9" height="22" viewBox="0 0 9 22" className="ml-[2px]"><path d="M4.500 0v21M1 17l3.500 4L8 17" fill="none" stroke="#444" strokeWidth="1.1" /></svg>
          </div>
        </div>
        降序(<span className="underline">O</span>)
      </div>
      <div className="flex h-[39px] items-center border-b border-[#d8d8d8] bg-[#f3f3f3]">
        <div className="flex w-[46px] justify-center">
          <svg width="20" height="20" viewBox="0 0 20 20">
            <path d="M1 1h18v18H1z" fill="#fff" stroke="#555" strokeWidth="1.3" />
            <path d="M1 1h18v4H1z" fill="#ddd" stroke="#555" strokeWidth="1.3" />
            <path d="M6.500 8v8M4 13.500l2.500 2.500L9 13.500" fill="none" stroke="#2b88d8" strokeWidth="1.3" />
            <path d="M13.500 16V8M11 10.500L13.500 8 16 10.500" fill="none" stroke="#444" strokeWidth="1.3" />
          </svg>
        </div>
        自定义排序(<span className="underline">U</span>)...
      </div>
      <div className="flex h-[36px] items-center">
        <div className="flex w-[46px] justify-center">
          <svg width="20" height="20" viewBox="0 0 20 20"><path d="M1 1h18l-6.500 8v10h-5V9z" fill="#fff" stroke="#555" strokeWidth="1.3" /></svg>
        </div>
        筛选(<span className="underline">F</span>)
      </div>
      <div className="flex h-[37px] items-center text-[#b5b5b5]">
        <div className="flex w-[46px] justify-center">
          <svg width="20" height="20" viewBox="0 0 20 20"><path d="M1 1h18l-6.500 8v10h-5V9z" fill="#fff" stroke="#bbb" strokeWidth="1.3" /><path d="M12 12l7 7M19 12l-7 7" stroke="#bbb" strokeWidth="1.2" /></svg>
        </div>
        清除(<span className="underline">C</span>)
      </div>
      <div className="flex h-[36px] items-center text-[#b5b5b5]">
        <div className="flex w-[46px] justify-center">
          <svg width="20" height="20" viewBox="0 0 20 20"><path d="M1 1h18l-6.500 8v10h-5V9z" fill="#fff" stroke="#bbb" strokeWidth="1.3" /><path d="M18 14a4 4 0 10-1 3" fill="none" stroke="#bbb" strokeWidth="1.2" /></svg>
        </div>
        重新应用(<span className="underline">Y</span>)
      </div>
    </div>
  );
}

function Watermark() {
  const stroke = "text-white/90 [-webkit-text-stroke:1px_#d4d4d4]";
  return (
    <div className="pointer-events-none absolute inset-0 z-10">
      <div className={`absolute left-[1474px] top-[878px] font-['Liberation_Sans',sans-serif] text-[76px] font-bold leading-none tracking-[-2px] ${stroke}`}>Bai</div>
      <svg width="120" height="145" viewBox="0 0 120 145" className="absolute left-[1585px] top-[830px]">
        <g fill="#fff" stroke="#d8d8d8" strokeWidth="2">
          <ellipse cx="20" cy="45" rx="13" ry="19" transform="rotate(-15 20 45)" />
          <ellipse cx="46" cy="23" rx="13" ry="18" />
          <ellipse cx="75" cy="23" rx="13" ry="18" />
          <ellipse cx="95" cy="53" rx="13" ry="19" transform="rotate(15 95 53)" />
          <path d="M54 44c14 0 20 22 32 34 10 12 4 34-18 34-10 0-16-2-22-2-16 0-26-12-22-26 3-14 16-40 30-40z" />
        </g>
        <text x="34" y="104" fontSize="38" fontFamily="Liberation Sans" fill="#fff" stroke="#d8d8d8">du</text>
      </svg>
      <div className={`absolute left-[1696px] top-[884px] font-['Noto_Sans_CJK_SC',sans-serif] text-[58px] font-bold leading-none ${stroke}`}>经验</div>
      <div className={`absolute left-[1476px] top-[952px] font-['Liberation_Sans',sans-serif] text-[43px] leading-none ${stroke}`}>jingyan.baidu.com</div>
    </div>
  );
}

function Annotations() {
  return (
    <>
      <div className="absolute left-[61px] top-[47px] z-20 h-[68px] w-[80px] border-[3px]" style={{ borderColor: RED }} />
      <div className="absolute left-[1507px] top-[102px] z-20 h-[97px] w-[93px] border-[3px]" style={{ borderColor: RED }} />
      <div className="absolute left-[1516px] top-[268px] z-20 h-[39px] w-[165px] border-[3px]" style={{ borderColor: RED }} />
      <svg width="1920" height="1039" viewBox="0 0 1920 1039" className="pointer-events-none absolute left-0 top-0 z-20">
        <polygon fill={RED} points="141,81 1475,143.500 1475,140 1496,149 1475,157 1475,152.500" />
        <polygon fill={RED} points="448,341 181.400,132.800 185.700,127.200 155,118 172.300,144.800 176.600,139.200" />
        <polygon fill={RED} points="1564,207 1570.600,242 1576,242 1568,259 1560,242 1564.600,242" />
      </svg>
    </>
  );
}

export default function App() {
  return (
    <div className="relative flex h-[1039px] w-[1920px] flex-col overflow-hidden bg-[#f0f0f0] font-['Noto_Sans','Noto_Sans_CJK_SC',sans-serif] text-[#262626]">
      <TitleBar />
      <TabsBar />
      <Ribbon />
      <FormulaBar />
      <Sheet />
      <SheetTabs />
      <StatusBar />
      <BottomStrip />
      <Menu />
      <Watermark />
      <Annotations />
    </div>
  );
}
